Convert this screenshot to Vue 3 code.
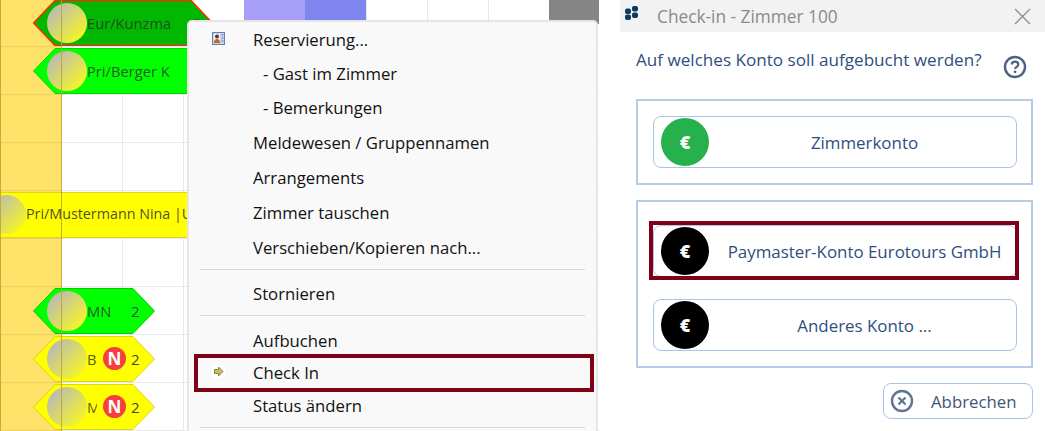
<script setup>
const columns = [
  { x: 244, w: 61, color: '#a8a0f8' },
  { x: 305, w: 61, color: '#7f86f0' },
  { x: 549, w: 50, color: '#858585' },
]
const chips = [
  { id: 1, label: 'Eur/Kunzma', x: 33, y: 0, w: 180, h: 46, fill: '#00b800', stroke: '#ff2a00', sw: 1.5, count: '2', countX: 160 },
  { id: 2, label: 'Pri/Berger K', x: 33, y: 48, w: 180, h: 46, fill: '#00ff00', stroke: '#00d800', sw: 1 },
  { id: 3, label: 'MN', x: 33, y: 288, w: 122, h: 46, fill: '#00ff00', stroke: '#00d000', sw: 1, count: '2', countX: 98 },
  { id: 4, label: 'B', x: 33, y: 336, w: 122, h: 46, fill: '#ffff00', stroke: '#dcd420', sw: 1, count: '2', countX: 98, badge: true },
  { id: 5, label: 'M', x: 33, y: 384, w: 122, h: 46, fill: '#ffff00', stroke: '#dcd420', sw: 1, count: '2', countX: 98, badge: true },
]
const hexPoints = (w, h) =>
  `0.5,${h / 2} 22,0.5 ${w - 22},0.5 ${w - 0.5},${h / 2} ${w - 22},${h - 0.5} 22,${h - 0.5}`

const menu = [
  { type: 'item', label: 'Reservierung...', h: 33, icon: 'res' },
  { type: 'item', label: '- Gast im Zimmer', h: 34, sub: true },
  { type: 'item', label: '- Bemerkungen', h: 35, sub: true },
  { type: 'item', label: 'Meldewesen / Gruppennamen', h: 35 },
  { type: 'item', label: 'Arrangements', h: 35 },
  { type: 'item', label: 'Zimmer tauschen', h: 35 },
  { type: 'item', label: 'Verschieben/Kopieren nach...', h: 35 },
  { type: 'sep', mt: 4, mb: 6 },
  { type: 'item', label: 'Stornieren', h: 35 },
  { type: 'sep', mt: 4, mb: 8 },
  { type: 'item', label: 'Aufbuchen', h: 32 },
  { type: 'item', label: 'Check In', h: 33, icon: 'arrow', mark: true },
  { type: 'item', label: 'Status ändern', h: 32 },
  { type: 'sep', mt: 6, mb: 0 },
]
</script>

<template>
  <div class="page">
    <section class="planner">
      <div class="goldcol"></div>
      <div v-for="c in columns" :key="c.x" class="topcell"
           :style="{ left: c.x + 'px', width: c.w + 'px', background: c.color }"></div>

      <div v-for="c in chips" :key="c.id" class="chip"
           :style="{ left: c.x + 'px', top: c.y + 'px', width: c.w + 'px', height: c.h + 'px' }">
        <svg class="hex" :width="c.w" :height="c.h" :viewBox="`0 0 ${c.w} ${c.h}`">
          <polygon :points="hexPoints(c.w, c.h)" :fill="c.fill" :stroke="c.stroke" :stroke-width="c.sw" />
        </svg>
        <span class="disc"></span>
        <span class="chiplabel" :class="{ cut: c.label === 'M' }">{{ c.label }}</span>
        <span v-if="c.count" class="chipcount" :style="{ left: c.countX + 'px' }">{{ c.count }}</span>
        <span v-if="c.badge" class="nbadge">N</span>
      </div>

      <div class="longbar">
        <span class="disc small"></span>
        <span class="longlabel">Pri/Mustermann Nina |Urlaub</span>
      </div>

      <div class="guide g0"></div>
      <div class="guide g1"></div>

      <nav class="menu">
        <template v-for="(m, i) in menu" :key="i">
          <hr v-if="m.type === 'sep'" class="sep" :style="{ marginTop: m.mt + 'px', marginBottom: m.mb + 'px' }" />
          <div v-else class="item" :class="{ sub: m.sub }" :style="{ height: m.h + 'px' }">
            <span class="iconslot">
              <svg v-if="m.icon === 'res'" width="13" height="13" viewBox="0 0 13 13">
                <rect x="0.5" y="0.5" width="12" height="12" fill="#c8d4ec" stroke="#6a80b4" />
                <rect x="2" y="2" width="6" height="9" fill="#f4f4f4" />
                <circle cx="5" cy="4.5" r="2" fill="#4a3a3a" />
                <path d="M2 11 Q2 7 5 7 Q8 7 8 11 Z" fill="#d0601c" />
                <path d="M9.5 3h2M9.5 6h2M9.5 9h2" stroke="#6a80b4" />
              </svg>
              <svg v-else-if="m.icon === 'arrow'" class="arrowicon" width="13" height="13" viewBox="0 0 13 13">
                <rect width="13" height="13" fill="#fff" />
                <path d="M2.5 4.5h4V2l4.5 4.5L6.5 11V8.500h-4z" fill="#c8bc5c" stroke="#8c8440" stroke-width="1" />
              </svg>
            </span>
            <span>{{ m.label }}</span>
            <span v-if="m.mark" class="mark menumark"></span>
          </div>
        </template>
      </nav>
    </section>

    <section class="dialog">
      <header class="titlebar">
        <svg class="logo" width="13" height="14" viewBox="0 0 13 14">
          <rect x="0" y="2.500" width="6" height="5.500" rx="2" fill="#0b3a5e" />
          <rect x="0" y="8.500" width="6" height="5.500" rx="2" fill="#0b3a5e" />
          <rect x="7" y="0" width="6" height="5.500" rx="2" fill="#0b3a5e" />
          <rect x="7" y="6.500" width="6" height="5.500" rx="2" fill="#0b3a5e" />
        </svg>
        <span class="titletext">Check-in - Zimmer 100</span>
        <svg class="closeicon" width="17" height="17" viewBox="0 0 17 17">
          <path d="M1 1l15 15M16 1L1 16" stroke="#8f8f8f" stroke-width="1.300" fill="none" />
        </svg>
      </header>

      <div class="body">
        <div class="question">
          <span>Auf welches Konto soll aufgebucht werden?</span>
          <svg width="24" height="24" viewBox="0 0 24 24" class="help">
            <circle cx="12" cy="12" r="10" fill="none" stroke="#4c6484" stroke-width="2.400" />
            <path d="M8.800 9.600c0-2 1.500-3 3.300-3s3.200 1 3.200 2.800c0 2.400-3.200 2.400-3.200 4.600" fill="none" stroke="#4c6484" stroke-width="2.200" />
            <circle cx="12.100" cy="16.800" r="1.400" fill="#4c6484" />
          </svg>
        </div>

        <div class="group first">
          <button class="account">
            <span class="euro green">€</span>
            <span class="acctext">Zimmerkonto</span>
          </button>
        </div>

        <div class="group second">
          <button class="account marked">
            <span class="euro">€</span>
            <span class="acctext">Paymaster-Konto Eurotours GmbH</span>
            <span class="mark acctmark"></span>
          </button>
          <button class="account">
            <span class="euro">€</span>
            <span class="acctext">Anderes Konto ...</span>
          </button>
        </div>

        <div class="footer">
          <button class="cancel">
            <svg width="24" height="24" viewBox="0 0 24 24">
              <circle cx="12" cy="12" r="10" fill="none" stroke="#5f7590" stroke-width="2.400" />
              <path d="M8.500 8.500l7 7M15.500 8.500l-7 7" stroke="#5f7590" stroke-width="2.200" fill="none" />
            </svg>
            <span>Abbrechen</span>
          </button>
        </div>
      </div>
    </section>
  </div>
</template>

<style>
html, body { margin: 0; background: #fff; overflow: hidden; }
</style>

<style scoped>
.page {
  display: flex;
  width: 1045px;
  height: 431px;
  overflow: hidden;
  background: #fff;
  font-family: "Open Sans", "Noto Sans", sans-serif;
}
.planner {
  position: relative;
  flex: 0 0 599px;
  height: 431px;
  overflow: hidden;
  background-color: #fff;
  background-image:
    repeating-linear-gradient(to right, transparent 0, transparent 60px, #e8e8e8 60px, #e8e8e8 61px),
    repeating-linear-gradient(to bottom, transparent 0, transparent 46px, #e8e8e8 46px, #e8e8e8 47px, transparent 47px, transparent 48px);
  background-position: 1px 0, 0 0;
}
.goldcol {
  position: absolute;
  left: 0;
  top: 0;
  width: 61px;
  height: 431px;
  background-color: #fde169;
  background-image: repeating-linear-gradient(to bottom, transparent 0, transparent 46px, #ecd160 46px, #ecd160 47px, transparent 47px, transparent 48px);
}
.topcell { position: absolute; top: 0; height: 24px; }
.chip { position: absolute; }
.hex { position: absolute; inset: 0; display: block; }
.disc {
  position: absolute;
  left: 14px;
  top: 3px;
  width: 40px;
  height: 40px;
  border-radius: 50%;
  background: linear-gradient(135deg, #bcbcb0 15%, #f4f42a 85%);
}
.chiplabel {
  position: absolute;
  left: 54px;
  top: 0;
  line-height: 46px;
  font-size: 14.700px;
  color: rgba(45, 45, 45, 0.8);
  white-space: nowrap;
}
.chiplabel.cut { width: 10px; overflow: hidden; }
.chipcount {
  position: absolute;
  top: 0;
  line-height: 46px;
  font-size: 15px;
  color: #444;
}
.nbadge {
  position: absolute;
  left: 70px;
  top: 11px;
  width: 23px;
  height: 23px;
  border-radius: 50%;
  background: #f4403e;
  color: #fff;
  font-weight: 700;
  font-size: 17px;
  line-height: 23px;
  text-align: center;
}
.longbar {
  position: absolute;
  left: 1px;
  top: 192px;
  width: 240px;
  height: 46px;
  box-sizing: border-box;
  background: #ffff00;
  border-top: 1px solid #dcd420;
  border-bottom: 1px solid #dcd420;
  overflow: hidden;
}
.disc.small { left: -14px; top: 2px; width: 39px; height: 39px; }
.longlabel {
  position: absolute;
  left: 25px;
  top: -1px;
  line-height: 44px;
  font-size: 14.300px;
  color: rgba(45, 45, 45, 0.85);
  white-space: nowrap;
}
.guide {
  position: absolute;
  top: 0;
  width: 1px;
  height: 431px;
  background: rgba(190, 165, 50, 0.9);
}
.g0 { left: 0; }
.g1 { left: 61px; }

.menu {
  position: absolute;
  left: 187px;
  top: 20px;
  width: 411px;
  height: 420px;
  box-sizing: border-box;
  padding: 1px 11px 0 11px;
  background: #f9f9f9;
  border: 2px solid #e6e6e6;
  border-radius: 5px;
  color: #111;
  font-size: 16.700px;
}
.item {
  position: relative;
  display: flex;
  align-items: center;
  padding-left: 53px;
}
.item.sub { padding-left: 63px; }
.iconslot {
  position: absolute;
  left: 12px;
  top: 50%;
  height: 13px;
  margin-top: -8px;
}
.iconslot svg { display: block; }
.sep {
  border: 0;
  height: 1px;
  background: #d8d8d8;
  margin-left: 0;
  margin-right: 0;
}
.mark {
  position: absolute;
  box-sizing: border-box;
  border: 4px solid #800018;
  pointer-events: none;
}
.menumark { left: -6px; right: -9px; top: -2px; bottom: -3px; }

.dialog {
  flex: 0 0 425px;
  margin-left: 21px;
  color: #2e4f7e;
}
.titlebar {
  display: flex;
  align-items: center;
  height: 32px;
  background: #f2f2f2;
  padding: 0 14px 0 5px;
  box-sizing: border-box;
}
.logo { margin-top: -6px; }
.titletext {
  margin-left: 19px;
  flex: 1;
  color: #8a8a8a;
  font-size: 17.300px;
}
.body { padding: 0 12px 0 16px; }
.question {
  display: flex;
  justify-content: space-between;
  align-items: flex-start;
  height: 67px;
  box-sizing: border-box;
  padding: 17px 6px 0 0;
  font-size: 17.100px;
  line-height: 22px;
}
.help { margin-top: 6px; }
.group {
  display: flex;
  flex-direction: column;
  box-sizing: border-box;
  border: 2px solid #b4cce8;
  padding: 0 14px 0 15px;
}
.group.first { height: 86px; justify-content: center; }
.group.second {
  height: 168px;
  margin-top: 15px;
  padding-top: 23px;
  gap: 22px;
}
.account {
  position: relative;
  display: flex;
  align-items: center;
  height: 52px;
  padding: 0 7px;
  background: #fff;
  border: 1px solid #a9c4e6;
  border-radius: 8px;
  font: inherit;
  font-size: 16.900px;
  color: inherit;
}
.euro {
  flex: 0 0 48px;
  width: 48px;
  height: 48px;
  border-radius: 50%;
  background: #000;
  color: #fff;
  font-weight: 800;
  font-size: 18px;
  line-height: 48px;
  text-align: center;
}
.euro.green { background: #27b14d; }
.acctext { flex: 1; text-align: center; padding-left: 11px; }
.acctmark { left: -5px; right: -3px; top: -5px; bottom: -4px; }
.footer {
  display: flex;
  justify-content: flex-end;
  margin-top: 15px;
}
.cancel {
  display: flex;
  align-items: center;
  width: 150px;
  height: 36px;
  box-sizing: border-box;
  padding: 0 0 0 6px;
  background: #fff;
  border: 1px solid #a9c4e6;
  border-radius: 8px;
  font: inherit;
  font-size: 16.800px;
  color: #3d5678;
  gap: 17px;
}
</style>
